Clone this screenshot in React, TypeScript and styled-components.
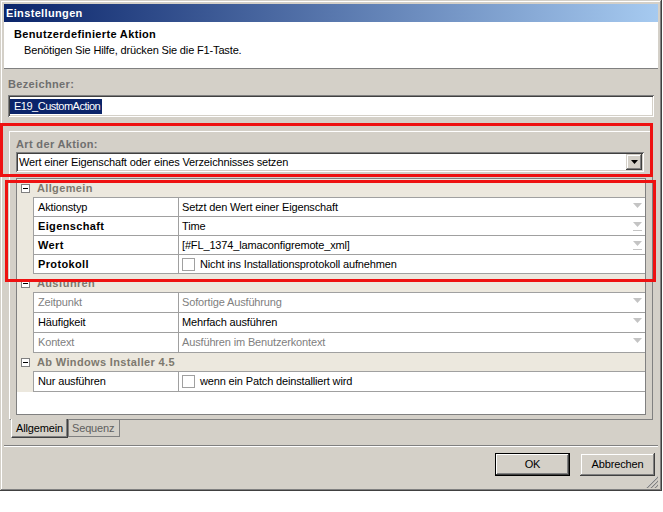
import styled, { createGlobalStyle, css } from "styled-components";

const GlobalStyle = createGlobalStyle`
  html, body {
    margin: 0;
    padding: 0;
    background: #fff;
  }
  body {
    font-family: "Liberation Sans", Arial, sans-serif;
    font-size: 11px;
  }
  * {
    box-sizing: border-box;
  }
`;

const raised = css`
  box-shadow: inset -1px -1px #404040, inset 1px 1px #d4d0c8,
    inset -2px -2px #808080, inset 2px 2px #ffffff;
`;

const sunken = css`
  box-shadow: inset 1px 1px #808080, inset -1px -1px #ffffff,
    inset 2px 2px #404040, inset -2px -2px #d4d0c8;
`;

const Window = styled.div`
  position: relative;
  width: 662px;
  height: 491px;
  padding: 4px;
  display: flex;
  flex-direction: column;
  background: #d4d0c8;
  color: #000;
  line-height: 13px;
  letter-spacing: -0.15px;
  ${raised};
`;

const TitleBar = styled.div`
  height: 18px;
  padding-left: 2px;
  display: flex;
  align-items: center;
  background: linear-gradient(to right, #0a246a, #a6caf0);
  color: #fff;
  font-weight: bold;
  letter-spacing: 0.35px;
`;

const Header = styled.div`
  height: 47px;
  padding: 6px 10px 0;
  background: #fff;
  border-bottom: 1px solid #808080;
`;

const HeaderTitle = styled.div`
  font-weight: bold;
  letter-spacing: 0.35px;
`;

const HeaderHint = styled.div`
  margin-top: 3px;
  padding-left: 10px;
`;

const Body = styled.div`
  padding: 9px 4px 0;
`;

const FieldLabel = styled.div`
  font-weight: bold;
  color: #6f6f6f;
  letter-spacing: 0.35px;
`;

const TextBox = styled.div`
  margin-top: 4px;
  height: 22px;
  padding: 0 2px;
  display: flex;
  align-items: center;
  background: #fff;
  ${sunken};
`;

const Selection = styled.span`
  padding: 1px 2px 1px 4px;
  background: #0a246a;
  color: #fff;
  letter-spacing: -0.5px;
`;

const TabControl = styled.div`
  margin: 14px 1px 0;
`;

const TabPage = styled.div`
  height: 289px;
  padding: 6px 6px 0;
  display: flex;
  flex-direction: column;
  border-top: 1px solid #fff;
  border-left: 1px solid #fff;
  border-right: 1px solid #808080;
  border-bottom: 1px solid #808080;
`;

const ComboBox = styled.div`
  margin: 1px 2px 0 0;
  height: 20px;
  padding: 2px 2px 2px 3px;
  display: flex;
  align-items: center;
  background: #fff;
  ${sunken};
`;

const ComboText = styled.span`
  flex: 1;
`;

const ComboButton = styled.div`
  width: 16px;
  height: 16px;
  display: flex;
  align-items: center;
  justify-content: center;
  background: #d4d0c8;
  ${raised};
`;

const Grid = styled.div`
  margin-top: 6px;
  height: 237px;
  display: flex;
  flex-direction: column;
  background: #fff;
  border: 1px solid #808080;
`;

const CategoryRow = styled.div`
  height: 19px;
  display: flex;
  background: #ece8de;
`;

const Gutter = styled.div`
  width: 16px;
  flex-shrink: 0;
  display: flex;
  align-items: center;
  padding-left: 4px;
  background: #ece8de;
`;

const Expander = styled.div`
  width: 9px;
  height: 9px;
  display: flex;
  align-items: center;
  justify-content: center;
  background: #fff;
  border: 1px solid #808080;

  &::before {
    content: "";
    width: 5px;
    height: 1px;
    background: #000;
  }
`;

const CategoryLabel = styled.div`
  flex: 1;
  display: flex;
  align-items: center;
  padding-left: 4px;
  border-bottom: 1px solid #a0a0a0;
  font-weight: bold;
  color: #7d786e;
  letter-spacing: 0.35px;
`;

const DataRow = styled.div<{ $height: number }>`
  height: ${(p) => p.$height}px;
  display: flex;
`;

const Cells = styled.div`
  flex: 1;
  display: flex;
  border-left: 1px solid #a0a0a0;
  border-bottom: 1px solid #a0a0a0;
`;

const NameCell = styled.div<{ $tone: Tone }>`
  width: 145px;
  flex-shrink: 0;
  display: flex;
  align-items: center;
  padding-left: 4px;
  border-right: 1px solid #a0a0a0;
  ${(p) =>
    p.$tone === "bold" &&
    css`
      font-weight: bold;
      letter-spacing: 0.35px;
    `}
  ${(p) => p.$tone === "muted" && "color: #808080;"}
`;

const ValueCell = styled.div<{ $muted?: boolean }>`
  flex: 1;
  display: flex;
  align-items: center;
  padding: 0 3px;
  color: ${(p) => (p.$muted ? "#808080" : "#000")};
`;

const ValueText = styled.span`
  flex: 1;
`;

const CheckBox = styled.span`
  width: 13px;
  height: 13px;
  margin-right: 5px;
  background: #fff;
  border: 1px solid #a0a0a0;
`;

const EmptyArea = styled.div`
  flex: 1;
`;

const TabStrip = styled.div`
  margin-top: -1px;
  padding-left: 2px;
  display: flex;
  align-items: flex-start;
`;

const Tab = styled.div<{ $active?: boolean }>`
  display: flex;
  align-items: center;
  ${(p) =>
    p.$active
      ? css`
          width: 57px;
          height: 19px;
          padding-left: 4px;
          background: #d4d0c8;
          border-left: 1px solid #fff;
          border-right: 1px solid #404040;
          border-bottom: 1px solid #404040;
          box-shadow: inset -1px -1px #808080;
        `
      : css`
          width: 52px;
          height: 17px;
          margin-top: 1px;
          padding-left: 3px;
          color: #5f5f5f;
          border: 1px solid #808080;
          border-top: none;
        `}
`;

const Footer = styled.div`
  margin-top: 7px;
  padding: 7px 3px 0;
  display: flex;
  justify-content: flex-end;
  gap: 10px;
  border-top: 1px solid #808080;
  box-shadow: inset 0 1px #fff;
`;

const Button = styled.button<{ $default?: boolean }>`
  width: 75px;
  height: 23px;
  padding: 0;
  border: none;
  background: #d4d0c8;
  color: #000;
  font: inherit;
  letter-spacing: inherit;
  ${(p) =>
    p.$default
      ? css`
          box-shadow: inset 0 0 0 1px #000, inset -2px -2px #404040,
            inset 2px 2px #fff, inset -3px -3px #808080;
        `
      : raised};
`;

const Grip = styled.svg`
  position: absolute;
  right: 4px;
  bottom: 3px;
`;

const Marker = styled.div<{ $left: number; $top: number; $width: number; $height: number }>`
  position: absolute;
  left: ${(p) => p.$left}px;
  top: ${(p) => p.$top}px;
  width: ${(p) => p.$width}px;
  height: ${(p) => p.$height}px;
  border: 3px solid #ee1111;
  pointer-events: none;
`;

type Tone = "bold" | "muted" | "normal";
type Control = "drop" | "browse" | "check";

type PropertyItem = {
  name: string;
  value: string;
  tone: Tone;
  valueMuted?: boolean;
  control: Control;
};

type Category = {
  title: string;
  rowHeight: number;
  items: PropertyItem[];
};

const categories: Category[] = [
  {
    title: "Allgemein",
    rowHeight: 19,
    items: [
      { name: "Aktionstyp", value: "Setzt den Wert einer Eigenschaft", tone: "normal", control: "drop" },
      { name: "Eigenschaft", value: "Time", tone: "bold", control: "browse" },
      { name: "Wert", value: "[#FL_1374_lamaconfigremote_xml]", tone: "bold", control: "browse" },
      { name: "Protokoll", value: "Nicht ins Installationsprotokoll aufnehmen", tone: "bold", control: "check" },
    ],
  },
  {
    title: "Ausführen",
    rowHeight: 20,
    items: [
      { name: "Zeitpunkt", value: "Sofortige Ausführung", tone: "muted", valueMuted: true, control: "drop" },
      { name: "Häufigkeit", value: "Mehrfach ausführen", tone: "normal", control: "drop" },
      { name: "Kontext", value: "Ausführen im Benutzerkontext", tone: "muted", valueMuted: true, control: "drop" },
    ],
  },
  {
    title: "Ab Windows Installer 4.5",
    rowHeight: 20,
    items: [
      { name: "Nur ausführen", value: "wenn ein Patch deinstalliert wird", tone: "normal", control: "check" },
    ],
  },
];

const DropArrow = ({ underline }: { underline?: boolean }) => (
  <svg width="9" height="9" viewBox="0 0 9 9">
    <path d="M0 0H9L4.5 5Z" fill="#c4c4c4" />
    {underline && <rect x="0" y="8" width="9" height="1" fill="#c4c4c4" />}
  </svg>
);

const PropertyRow = ({ item, height }: { item: PropertyItem; height: number }) => (
  <DataRow $height={height}>
    <Gutter />
    <Cells>
      <NameCell $tone={item.tone}>{item.name}</NameCell>
      <ValueCell $muted={item.valueMuted}>
        {item.control === "check" && <CheckBox />}
        <ValueText>{item.value}</ValueText>
        {item.control !== "check" && <DropArrow underline={item.control === "browse"} />}
      </ValueCell>
    </Cells>
  </DataRow>
);

export default function App() {
  return (
    <>
      <GlobalStyle />
      <Window>
        <TitleBar>Einstellungen</TitleBar>
        <Header>
          <HeaderTitle>Benutzerdefinierte Aktion</HeaderTitle>
          <HeaderHint>Benötigen Sie Hilfe, drücken Sie die F1-Taste.</HeaderHint>
        </Header>
        <Body>
          <FieldLabel>Bezeichner:</FieldLabel>
          <TextBox>
            <Selection>E19_CustomAction</Selection>
          </TextBox>
          <TabControl>
            <TabPage>
              <FieldLabel>Art der Aktion:</FieldLabel>
              <ComboBox>
                <ComboText>Wert einer Eigenschaft oder eines Verzeichnisses setzen</ComboText>
                <ComboButton>
                  <svg width="7" height="4" viewBox="0 0 7 4">
                    <path d="M0 0H7L3.5 4Z" fill="#000" />
                  </svg>
                </ComboButton>
              </ComboBox>
              <Grid>
                {categories.map((cat) => (
                  <div key={cat.title}>
                    <CategoryRow>
                      <Gutter>
                        <Expander />
                      </Gutter>
                      <CategoryLabel>{cat.title}</CategoryLabel>
                    </CategoryRow>
                    {cat.items.map((item) => (
                      <PropertyRow key={item.name} item={item} height={cat.rowHeight} />
                    ))}
                  </div>
                ))}
                <EmptyArea />
              </Grid>
            </TabPage>
            <TabStrip>
              <Tab $active>Allgemein</Tab>
              <Tab>Sequenz</Tab>
            </TabStrip>
          </TabControl>
        </Body>
        <Footer>
          <Button $default>OK</Button>
          <Button>Abbrechen</Button>
        </Footer>
        <Grip width="12" height="12" viewBox="0 0 12 12">
          <path d="M11 1L1 11M11 5L5 11M11 9L9 11" stroke="#fff" strokeWidth="1" />
          <path d="M12 1L1 12M12 5L5 12M12 9L9 12" stroke="#808080" strokeWidth="1.2" />
        </Grip>
        <Marker $left={0} $top={123} $width={653} $height={54} />
        <Marker $left={5} $top={180} $width={651} $height={102} />
      </Window>
    </>
  );
}
